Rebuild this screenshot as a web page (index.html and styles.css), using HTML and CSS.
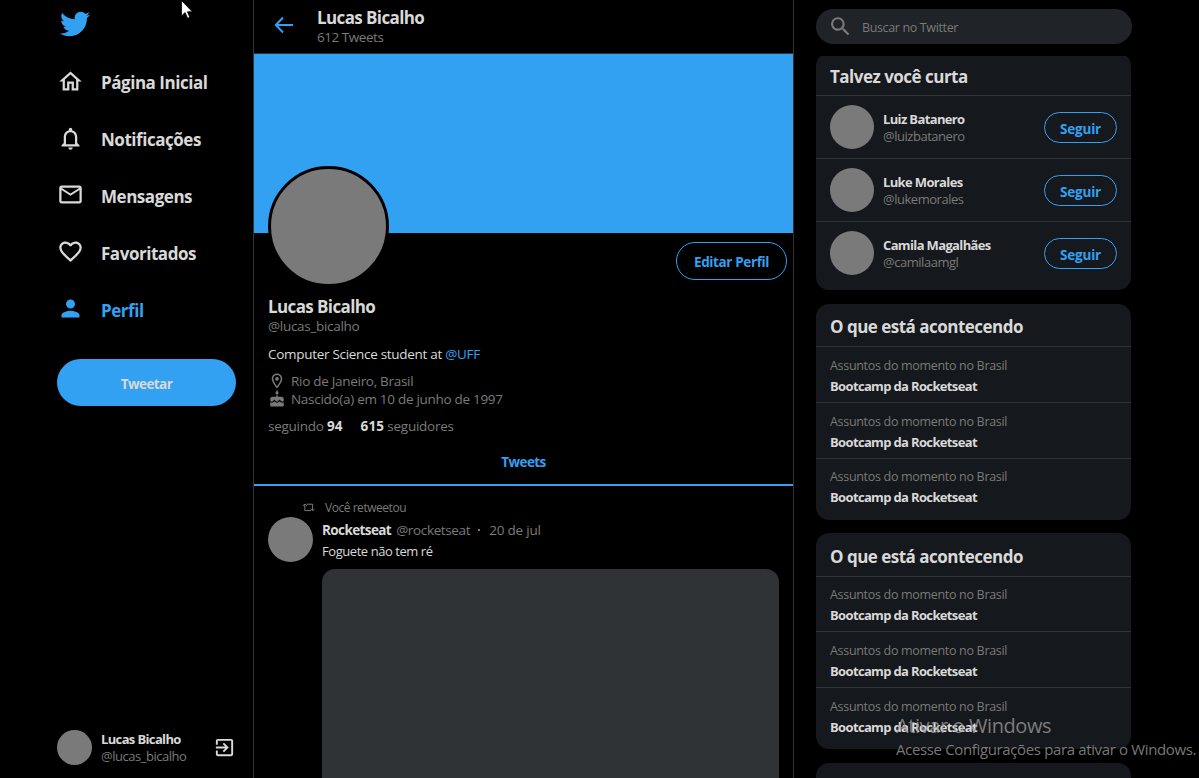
FILE: index.html
```html
<!DOCTYPE html>
<html lang="pt-BR">
<head>
<meta charset="utf-8">
<title>Lucas Bicalho</title>
<link rel="stylesheet" href="styles.css">
</head>
<body>
<div class="layout">
  <aside class="menu">
    <svg class="logo" viewBox="0 0 512 512"><path d="M459.37 151.716c.325 4.548.325 9.097.325 13.645 0 138.72-105.583 298.558-298.558 298.558-59.452 0-114.68-17.219-161.137-47.106 8.447.974 16.568 1.299 25.34 1.299 49.055 0 94.213-16.568 130.274-44.832-46.132-.975-84.792-31.188-98.112-72.772 6.498.974 12.995 1.624 19.818 1.624 9.421 0 18.843-1.3 27.614-3.573-48.081-9.747-84.143-51.98-84.143-102.985v-1.299c13.969 7.797 30.214 12.67 47.431 13.319-28.264-18.843-46.781-51.005-46.781-87.391 0-19.492 5.197-37.36 14.294-52.954 51.655 63.675 129.3 105.258 216.365 109.807-1.624-7.797-2.599-15.918-2.599-24.04 0-57.828 46.782-104.934 104.934-104.934 30.213 0 57.502 12.67 76.67 33.137 23.715-4.548 46.456-13.32 66.599-25.34-7.798 24.366-24.366 44.833-46.132 57.827 21.117-2.273 41.584-8.122 60.426-16.243-14.292 20.791-32.161 39.308-52.628 54.253z"/></svg>
    <nav class="nav">
      <a class="nav-item"><svg viewBox="0 0 24 24"><path d="M12 5.69l5 4.5V18h-2v-6H9v6H7v-7.81l5-4.5M12 3L2 12h3v8h6v-6h2v6h6v-8h3L12 3z"/></svg><span>Página Inicial</span></a>
      <a class="nav-item"><svg viewBox="0 0 24 24"><path d="M12 22c1.1 0 2-.9 2-2h-4c0 1.1.9 2 2 2zm6-6v-5c0-3.07-1.63-5.64-4.5-6.32V4c0-.83-.67-1.5-1.5-1.5s-1.5.67-1.5 1.5v.68C7.64 5.36 6 7.92 6 11v5l-2 2v1h16v-1l-2-2zm-2 1H8v-6c0-2.48 1.51-4.5 4-4.5s4 2.02 4 4.5v6z"/></svg><span>Notificações</span></a>
      <a class="nav-item"><svg viewBox="0 0 24 24"><path d="M22 6c0-1.1-.9-2-2-2H4c-1.1 0-2 .9-2 2v12c0 1.1.9 2 2 2h16c1.1 0 2-.9 2-2V6zm-2 0l-8 5-8-5h16zm0 12H4V8l8 5 8-5v10z"/></svg><span>Mensagens</span></a>
      <a class="nav-item"><svg viewBox="0 0 24 24"><path d="M16.5 3c-1.74 0-3.41.81-4.5 2.09C10.91 3.81 9.24 3 7.5 3 4.42 3 2 5.42 2 8.5c0 3.78 3.4 6.86 8.55 11.54L12 21.35l1.45-1.32C18.6 15.36 22 12.28 22 8.5 22 5.42 19.58 3 16.5 3zm-4.4 15.55l-.1.1-.1-.1C7.14 14.24 4 11.39 4 8.5 4 6.5 5.5 5 7.5 5c1.54 0 3.04.99 3.57 2.36h1.87C13.46 5.99 14.96 5 16.5 5c2 0 3.5 1.5 3.5 3.5 0 2.89-3.14 5.74-7.9 10.05z"/></svg><span>Favoritados</span></a>
      <a class="nav-item active"><svg viewBox="0 0 24 24"><path d="M12 12c2.21 0 4-1.79 4-4s-1.79-4-4-4-4 1.79-4 4 1.79 4 4 4zm0 2c-2.67 0-8 1.34-8 4v2h16v-2c0-2.66-5.33-4-8-4z"/></svg><span>Perfil</span></a>
    </nav>
    <button class="tweet-button"><span>Tweetar</span></button>
    <div class="account">
      <div class="avatar avatar-small"></div>
      <div class="account-text">
        <strong class="name">Lucas Bicalho</strong>
        <span class="handle">@lucas_bicalho</span>
      </div>
      <svg class="exit" viewBox="0 0 24 24"><path d="M10.09 15.59L11.5 17l5-5-5-5-1.41 1.41L12.67 11H3v2h9.67l-2.58 2.59zM19 3H5c-1.11 0-2 .9-2 2v4h2V5h14v14H5v-4H3v4c0 1.1.89 2 2 2h14c1.1 0 2-.9 2-2V5c0-1.1-.9-2-2-2z"/></svg>
    </div>
  </aside>

  <main class="profile">
    <header class="top">
      <svg class="back" viewBox="0 0 20 18"><path d="M9 1.5L1.8 9 9 16.5M2 9h17"/></svg>
      <div class="top-text">
        <strong class="title">Lucas Bicalho</strong>
        <span class="count">612 Tweets</span>
      </div>
    </header>
    <div class="banner"></div>
    <section class="bio">
      <div class="bio-head">
        <div class="avatar avatar-large"></div>
        <button class="edit"><span>Editar Perfil</span></button>
      </div>
      <h1 class="title">Lucas Bicalho</h1>
      <span class="user">@lucas_bicalho</span>
      <p class="about"><span>Computer Science student at <a>@UFF</a></span></p>
      <div class="fact"><svg viewBox="0 0 24 24"><path d="M12 2C8.13 2 5 5.13 5 9c0 5.25 7 13 7 13s7-7.75 7-13c0-3.87-3.13-7-7-7zM7 9c0-2.76 2.24-5 5-5s5 2.24 5 5c0 2.88-2.88 7.19-5 9.88C9.92 16.21 7 11.85 7 9z"/><circle cx="12" cy="9" r="2.5"/></svg><span>Rio de Janeiro, Brasil</span></div>
      <div class="fact"><svg viewBox="0 0 24 24"><path d="M12 6c1.11 0 2-.9 2-2 0-.38-.1-.73-.29-1.03L12 0l-1.71 2.97c-.19.3-.29.65-.29 1.03 0 1.1.9 2 2 2zm4.6 9.99l-1.07-1.07-1.08 1.07c-1.3 1.3-3.58 1.31-4.89 0l-1.07-1.07-1.09 1.07C6.75 16.64 5.88 17 4.96 17c-.73 0-1.4-.23-1.96-.61V21c0 .55.45 1 1 1h16c.55 0 1-.45 1-1v-4.61c-.56.38-1.23.61-1.96.61-.92 0-1.79-.36-2.44-1.01zM18 9h-5V7h-2v2H6c-1.66 0-3 1.34-3 3v1.54c0 1.08.88 1.96 1.96 1.96.52 0 1.02-.2 1.38-.57l2.14-2.13 2.13 2.13c.74.74 2.03.74 2.77 0l2.14-2.13 2.13 2.13c.37.37.86.57 1.38.57 1.08 0 1.96-.88 1.96-1.96V12C21 10.34 19.66 9 18 9z"/></svg><span>Nascido(a) em 10 de junho de 1997</span></div>
      <div class="follow"><span>seguindo <b>94</b></span><span><b>615</b> seguidores</span></div>
    </section>
    <div class="tab"><span>Tweets</span></div>
    <article class="tweet">
      <div class="retweeted"><svg viewBox="0 0 13 9"><path d="M.8 3L2.8 1l2 2M2.8 1v6.6H9M4.6 1.2h6v6.4M8.6 5.8l2 2 2-2"/></svg><span>Você retweetou</span></div>
      <div class="tweet-body">
        <div class="avatar avatar-tweet"></div>
        <div class="content">
          <div class="byline"><strong>Rocketseat</strong><span class="at">@rocketseat</span><i></i><span class="date">20 de jul</span></div>
          <p class="message"><span>Foguete não tem ré</span></p>
          <div class="media"></div>
        </div>
      </div>
    </article>
  </main>

  <aside class="side">
    <div class="search-wrap"><div class="search"><svg viewBox="0 0 24 24"><path d="M15.5 14h-.79l-.28-.27C15.41 12.59 16 11.11 16 9.5 16 5.91 13.09 3 9.5 3S3 5.91 3 9.5 5.91 16 9.5 16c1.61 0 3.09-.59 4.23-1.57l.27.28v.79l5 4.99L20.49 19l-4.99-5zm-6 0C7.01 14 5 11.99 5 9.5S7.01 5 9.5 5 14 7.01 14 9.5 11.99 14 9.5 14z"/></svg><span>Buscar no Twitter</span></div></div>
    <div class="cards">
      <section class="card">
        <h2>Talvez você curta</h2>
        <div class="person"><div class="avatar avatar-side"></div><div class="person-text"><strong class="name">Luiz Batanero</strong><span class="handle">@luizbatanero</span></div><button class="follow-button"><span>Seguir</span></button></div>
        <div class="person"><div class="avatar avatar-side"></div><div class="person-text"><strong class="name">Luke Morales</strong><span class="handle">@lukemorales</span></div><button class="follow-button"><span>Seguir</span></button></div>
        <div class="person"><div class="avatar avatar-side"></div><div class="person-text"><strong class="name">Camila Magalhães</strong><span class="handle">@camilaamgl</span></div><button class="follow-button"><span>Seguir</span></button></div>
      </section>
      <section class="card">
        <h2>O que está acontecendo</h2>
        <div class="topic"><span>Assuntos do momento no Brasil</span><strong>Bootcamp da Rocketseat</strong></div>
        <div class="topic"><span>Assuntos do momento no Brasil</span><strong>Bootcamp da Rocketseat</strong></div>
        <div class="topic"><span>Assuntos do momento no Brasil</span><strong>Bootcamp da Rocketseat</strong></div>
      </section>
      <section class="card">
        <h2>O que está acontecendo</h2>
        <div class="topic"><span>Assuntos do momento no Brasil</span><strong>Bootcamp da Rocketseat</strong></div>
        <div class="topic"><span>Assuntos do momento no Brasil</span><strong>Bootcamp da Rocketseat</strong></div>
        <div class="topic"><span>Assuntos do momento no Brasil</span><strong>Bootcamp da Rocketseat</strong></div>
      </section>
      <section class="card"></section>
    </div>
  </aside>
</div>
<div class="watermark"><span class="wm-title">Ativar o Windows</span><span class="wm-text">Acesse Configurações para ativar o Windows.</span></div>
<svg class="cursor" viewBox="0 0 12 19"><path d="M.5.5v15.5l3.6-3.4 2.5 5.7 2.3-1-2.5-5.5h5z"/></svg>
</body>
</html>
```
FILE: styles.css
```css
* { box-sizing: border-box; margin: 0; padding: 0; }
body { background: #000; color: #d9d9d9; font-family: "Open Sans", "Noto Sans", sans-serif; height: 778px; overflow: hidden; }
button { background: none; border: 0; font-family: inherit; }
svg { display: block; fill: currentColor; flex: none; }
.layout { display: grid; grid-template-columns: 253px 541px 1fr; grid-template-rows: 778px; height: 778px; overflow: hidden; }
.avatar { border-radius: 50%; background: #7a7a7a; flex: none; }

.menu { display: flex; flex-direction: column; padding: 9px 17px 13px 57px; }
.logo { width: 30px; height: 30px; margin-left: 3px; color: #33a1f2; flex: none; }
.nav { margin-top: 14px; }
.nav-item { display: flex; align-items: center; gap: 17px; height: 56.8px; font-size: 17px; font-weight: 700; line-height: 24px; letter-spacing: -.46px; }
.nav-item svg { width: 27px; height: 27px; }
.nav-item span { padding-top: 4px; }
.nav-item.active { color: #33a1f2; }
.tweet-button { margin-top: 22px; width: 179px; height: 47px; border-radius: 24px; background: #33a1f2; color: #d9d9d9; font-size: 13.5px; font-weight: 700; letter-spacing: -.55px; padding-top: 3px; flex: none; }
.account { display: flex; align-items: center; margin-top: auto; }
.avatar-small { width: 35px; height: 35px; }
.account-text { display: flex; flex-direction: column; margin-left: 9px; }
.name { font-size: 13px; line-height: 17px; letter-spacing: -.64px; }
.handle { font-size: 13px; line-height: 17px; letter-spacing: -.47px; color: #7a7a7a; }
.exit { width: 23px; height: 23px; margin-left: auto; }

.profile { border-left: 1px solid #2f3336; border-right: 1px solid #2f3336; overflow: hidden; display: flex; flex-direction: column; }
.top { display: flex; height: 54px; border-bottom: 1px solid #2f3336; padding: 7px 0 0 20px; flex: none; }
.back { width: 20px; height: 18px; margin-top: 9px; fill: none; stroke: #33a1f2; stroke-width: 2; }
.top-text { display: flex; flex-direction: column; margin-left: 23px; }
.title { font-size: 17px; line-height: 20px; font-weight: 700; letter-spacing: -.61px; }
.top .title, .bio .title { padding-top: 1px; height: 20px; }
.count, .user { font-size: 13.5px; line-height: 20px; color: #7a7a7a; letter-spacing: -.45px; }
.user { letter-spacing: -.3px; }
.banner { height: 179px; background: #33a1f2; flex: none; }
.bio { display: flex; flex-direction: column; padding: 0 6px 0 14px; flex: none; }
.bio-head { display: flex; justify-content: space-between; height: 63px; }
.avatar-large { width: 121px; height: 121px; border: 3px solid #000; margin-top: -67px; }
.edit { margin-top: 9px; width: 111px; height: 38px; border: 1px solid #33a1f2; border-radius: 19px; color: #33a1f2; font-size: 13.5px; font-weight: 700; letter-spacing: -.38px; padding-top: 2px; }
.about { font-size: 13.5px; line-height: 20px; letter-spacing: -.3px; margin: 8px 0 8px; }
.about a { color: #33a1f2; }
.fact { display: flex; align-items: center; height: 18px; font-size: 13.5px; line-height: 18px; letter-spacing: -.29px; color: #7a7a7a; }
.fact svg { width: 18px; height: 18px; margin-right: 5px; }
.follow { display: flex; gap: 18px; margin-top: 8px; font-size: 13.5px; line-height: 20px; letter-spacing: -.25px; color: #7a7a7a; }
.follow b { color: #d9d9d9; letter-spacing: .1px; }
.tab { display: flex; justify-content: center; align-items: center; height: 50px; padding-top: 3px; border-bottom: 2px solid #33a1f2; color: #33a1f2; font-size: 13.5px; font-weight: 700; letter-spacing: -.55px; flex: none; }
.tweet { padding: 12px 14px 0; }
.retweeted { display: flex; align-items: center; height: 18px; padding-left: 34px; font-size: 12px; letter-spacing: -.46px; color: #7a7a7a; }
.retweeted svg { width: 13px; height: 9px; fill: none; stroke: #7a7a7a; margin-right: 10px; }
.tweet-body { display: flex; gap: 9px; }
.avatar-tweet { width: 45px; height: 45px; margin-top: 1px; }
.content { flex: 1; padding-top: 4px; }
.byline { display: flex; align-items: center; height: 20px; font-size: 13.5px; letter-spacing: -.36px; color: #7a7a7a; }
.byline strong { color: #d9d9d9; letter-spacing: -.6px; margin-right: 5px; }
.byline i { width: 2px; height: 2px; background: #7a7a7a; margin: 0 9px 0 8px; }
.byline .date { letter-spacing: -.2px; }
.message { font-size: 13px; line-height: 20px; letter-spacing: -.44px; height: 29px; padding-top: 1px; }
.media { height: 260px; border-radius: 13px; background: #2f3336; }

.side { padding-left: 22px; min-width: 0; }
.search-wrap { position: relative; z-index: 1; height: 56px; padding-top: 9px; background: #000; }
.search { display: flex; align-items: center; width: 316px; height: 35px; border-radius: 18px; background: #202327; color: #7a7a7a; font-size: 12.5px; letter-spacing: -.36px; padding-left: 12px; }
.search svg { width: 25px; height: 25px; margin-right: 9px; }
.search span { padding-top: 2px; }
.cards { width: 315px; display: flex; flex-direction: column; gap: 13.6px; margin-top: -3px; }
.card { background: #15181c; border-radius: 13px; min-height: 60px; }
.card h2 { font-size: 17px; line-height: 24px; letter-spacing: -.51px; height: 42.4px; padding: 11.6px 14px 0; }
.person { display: flex; align-items: center; height: 63px; border-top: 1px solid #2f3336; padding: 0 14px; }
.person:last-child { height: 68.9px; padding-bottom: 6px; }
.avatar-side { width: 44px; height: 44px; }
.person-text { display: flex; flex-direction: column; margin-left: 9px; padding-top: 1px; }
.follow-button { margin-left: auto; width: 73px; height: 31px; border: 1px solid #33a1f2; border-radius: 16px; color: #33a1f2; font-size: 13.5px; font-weight: 700; letter-spacing: -.2px; padding-top: 3px; }
.topic { display: flex; flex-direction: column; height: 55.8px; border-top: 1px solid #2f3336; padding: 8.6px 14px 0; font-size: 12.5px; line-height: 20px; letter-spacing: -.31px; color: #7a7a7a; }
.topic strong { color: #d9d9d9; font-size: 13px; letter-spacing: -.65px; }
.topic:last-child { height: 61.8px; }

.watermark { position: absolute; left: 896px; top: 713px; z-index: 2; display: flex; flex-direction: column; color: rgba(160, 160, 160, .75); white-space: nowrap; }
.wm-title { font-size: 20px; line-height: 26px; letter-spacing: -.4px; }
.wm-text { font-size: 15px; line-height: 20px; letter-spacing: -.36px; }
.cursor { position: absolute; left: 181px; top: 0; width: 12px; height: 19px; fill: #fff; stroke: #000; stroke-width: .8; }
```
